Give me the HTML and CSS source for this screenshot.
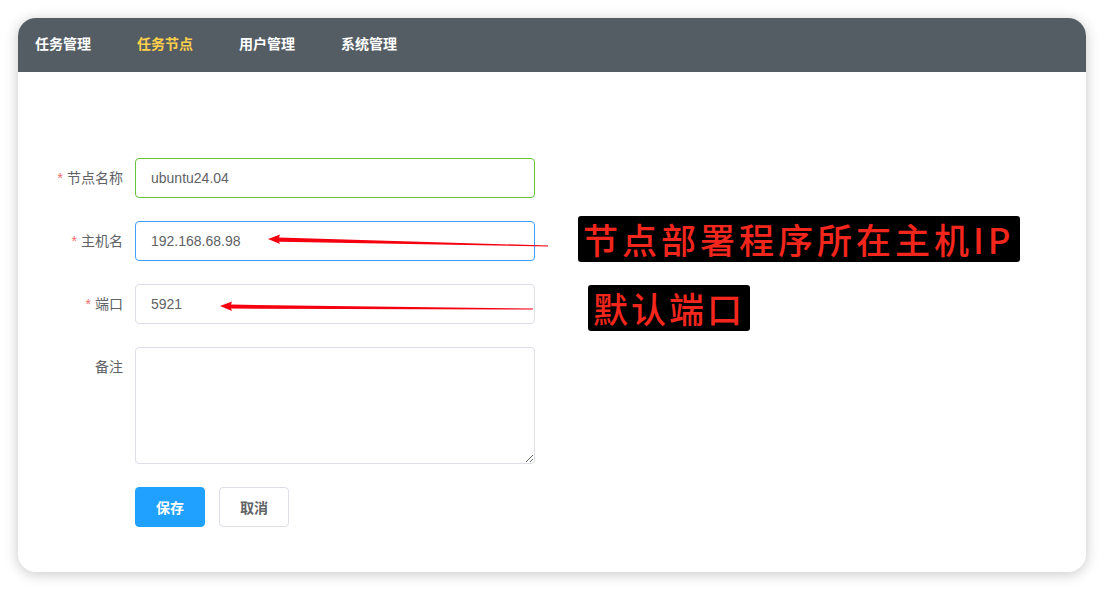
FILE: index.html
```html
<!DOCTYPE html>
<html lang="zh-CN">
<head>
    <meta charset="UTF-8">
    <meta name="viewport" content="width=device-width, initial-scale=1.0">
    <title>任务节点</title>
    <link rel="stylesheet" href="styles.css">
</head>
<body>
    <div class="window">
        <nav class="navbar">
            <a href="#" class="navbar-link">任务管理</a>
            <a href="#" class="navbar-link active">任务节点</a>
            <a href="#" class="navbar-link">用户管理</a>
            <a href="#" class="navbar-link">系统管理</a>
        </nav>

        <div class="content">
            <form class="node-form">
                <div class="form-row">
                    <label class="form-label required">节点名称</label>
                    <input type="text" class="form-input ok" value="ubuntu24.04">
                </div>
                <div class="form-row">
                    <label class="form-label required">主机名</label>
                    <input type="text" class="form-input focus" value="192.168.68.98">
                </div>
                <div class="form-row">
                    <label class="form-label required">端口</label>
                    <input type="text" class="form-input" value="5921">
                </div>
                <div class="form-row">
                    <label class="form-label">备注</label>
                    <textarea class="form-textarea"></textarea>
                </div>
                <div class="form-row">
                    <span class="form-label"></span>
                    <div class="form-buttons">
                        <button type="button" class="btn btn-primary">保存</button>
                        <button type="button" class="btn">取消</button>
                    </div>
                </div>
            </form>
        </div>

        <!-- screenshot annotations -->
        <div class="note note-host">节点部署程序所在主机IP</div>
        <div class="note note-port">默认端口</div>
        <svg class="arrows" width="1068" height="554" viewBox="0 0 1068 554">
            <polygon points="250,221 262,216.5 261,219.6 530,227.5 530,228.5 261,223.8 262,226" fill="#f5000f"/>
            <polygon points="202,288 214,283.5 213,286.6 515,290.5 515,291.5 213,290.6 214,293" fill="#f5000f"/>
        </svg>
    </div>
</body>
</html>
```

FILE: styles.css
```css
body {
    margin: 0;
    background-color: #ffffff;
    font-family: "Liberation Sans", "Noto Sans CJK SC", sans-serif;
}

.window {
    position: relative;
    margin: 18px;
    width: 1068px;
    height: 554px;
    background-color: #ffffff;
    border-radius: 18px;
    overflow: hidden;
    box-shadow: 0 2px 14px rgba(0, 0, 0, 0.22);
}

.navbar {
    display: flex;
    align-items: center;
    box-sizing: border-box;
    height: 54px;
    padding: 0 0 4px 17px;
    background-color: #545c64;
}

.navbar-link {
    margin-right: 46px;
    font-size: 14px;
    font-weight: bold;
    color: #ffffff;
    text-decoration: none;
}

.navbar-link.active {
    color: #ffd04b;
}

.content {
    padding: 86px 0 0 0;
}

.node-form {
    display: flex;
    flex-direction: column;
    gap: 23px;
}

.form-row {
    display: flex;
    align-items: flex-start;
}

.form-label {
    width: 105px;
    padding-right: 12px;
    line-height: 40px;
    text-align: right;
    font-size: 14px;
    color: #606266;
}

.form-label.required::before {
    content: "*";
    margin-right: 4px;
    color: #f56c6c;
}

.form-input,
.form-textarea {
    box-sizing: border-box;
    width: 400px;
    padding: 0 15px;
    font-family: inherit;
    font-size: 14px;
    color: #606266;
    border: 1px solid #dcdfe6;
    border-radius: 4px;
    outline: none;
}

.form-input {
    height: 40px;
}

.form-input.ok {
    border-color: #67c23a;
}

.form-input.focus {
    border-color: #409eff;
}

.form-textarea {
    height: 117px;
    padding: 5px 15px;
}

.form-buttons {
    display: flex;
    gap: 14px;
}

.btn {
    width: 70px;
    height: 40px;
    font-family: inherit;
    font-size: 14px;
    font-weight: bold;
    color: #606266;
    background-color: #ffffff;
    border: 1px solid #dcdfe6;
    border-radius: 4px;
}

.btn-primary {
    color: #ffffff;
    background-color: #20a0ff;
    border-color: #20a0ff;
}

.note {
    position: absolute;
    padding: 0 5px;
    background-color: #000000;
    border-radius: 3px;
    font-family: "Noto Sans CJK SC", sans-serif;
    font-size: 35px;
    font-weight: 500;
    letter-spacing: 3px;
    line-height: 46px;
    color: #f2261c;
    white-space: nowrap;
}

.note-host {
    left: 560px;
    top: 198px;
    letter-spacing: 4px;
}

.note-port {
    left: 570px;
    top: 267px;
}

.arrows {
    position: absolute;
    left: 0;
    top: 0;
    pointer-events: none;
}
```
